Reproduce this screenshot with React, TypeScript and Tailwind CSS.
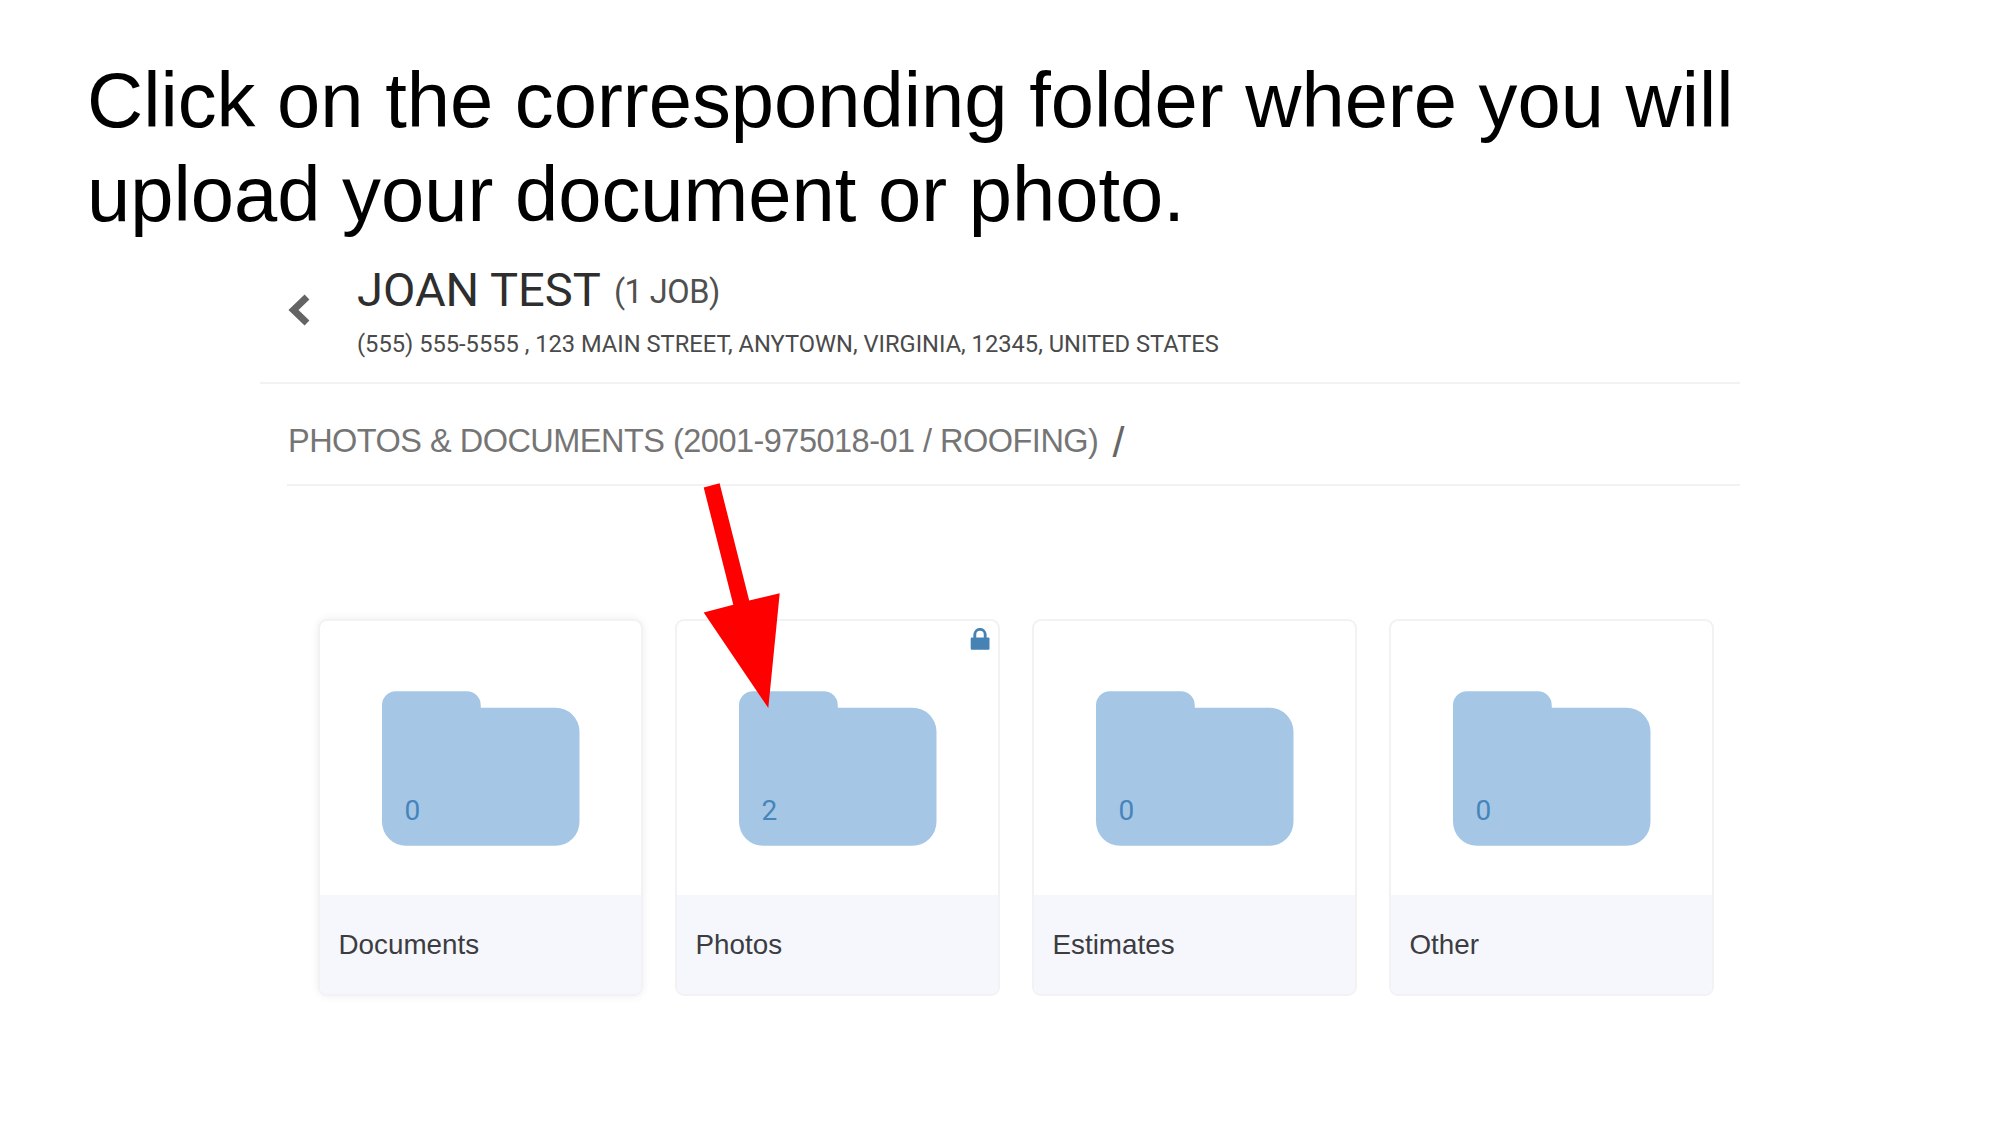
type Folder = { name: string; count: number; locked?: boolean; raised?: boolean };

const folders: Folder[] = [
  { name: 'Documents', count: 0, raised: true },
  { name: 'Photos', count: 2, locked: true },
  { name: 'Estimates', count: 0 },
  { name: 'Other', count: 0 },
];

function LockIcon() {
  return (
    <svg viewBox="0 0 20 22" className="absolute right-[8px] top-[7px] h-[22px] w-5" fill="none">
      <path d="M4.8 10V6.600a5.200 5.200 0 0 1 10.400 0V10" stroke="#4682b4" strokeWidth="2.900" />
      <rect x="0.7" y="9.6" width="18.8" height="12.2" rx="1" fill="#4682b4" />
    </svg>
  );
}

function FolderCard({ name, count, locked, raised }: Folder) {
  return (
    <div
      className={
        'relative flex h-[377px] w-[325px] flex-col overflow-hidden rounded-[9px] border-2 border-[#f2f2f4] bg-white ' +
        (raised ? 'shadow-[0_0_9px_rgba(0,0,0,0.07)]' : '')
      }
    >
      {locked && <LockIcon />}
      <div className="flex h-[274px] pl-[62.5px] pt-[70px]">
        <div className="relative h-[155px] w-[197.5px]">
          <svg viewBox="0 0 198 155" className="h-full w-full" fill="#a5c7e5">
            <path d="M0 14A14 14 0 0 1 14 0H85A14 14 0 0 1 99 14V16.5H174A24 24 0 0 1 198 40.500V131A24 24 0 0 1 174 155H24A24 24 0 0 1 0 131Z" />
          </svg>
          <span className="absolute bottom-[19px] left-[22.5px] font-['Roboto',sans-serif] text-[28px] leading-8 text-[#4685bb]">
            {count}
          </span>
        </div>
      </div>
      <div className="flex flex-1 items-center bg-[#f5f7fc] pl-[19px] text-[27.8px] leading-8 text-[#3c3c41]">
        {name}
      </div>
    </div>
  );
}

function PointerArrow() {
  return (
    <svg viewBox="0 0 78 226" className="absolute left-[703px] top-[483px] h-[226px] w-[78px]" fill="#ff0000">
      <path d="M0.700 4.500 16.600 0.300 46.200 117.500 76.700 110.200 65.300 225 0.700 129.600 30.300 121.700Z" />
    </svg>
  );
}

export default function App() {
  return (
    <main className="relative h-[1125px] w-[2000px] overflow-hidden bg-white font-['Liberation_Sans',sans-serif]">
      <h1 className="pb-px pl-[87px] pt-[53px] text-[77.75px] leading-[94px] text-black">
        Click on the corresponding folder where you will
        <br />
        upload your document or photo.
      </h1>

      <section className="ml-[260px] w-[1480px]">
        <header className="flex h-[142px] border-b-2 border-[#f2f2f2] pl-7 pt-5 font-['Roboto',sans-serif]">
          <svg viewBox="0 0 22 34" className="mt-[31px] h-[34px] w-[22px]" fill="none">
            <path d="M19 4 5.500 17 19 30" stroke="#646464" strokeWidth="7" />
          </svg>
          <div className="ml-[47px]">
            <div className="flex items-start">
              <h2 className="text-[47.1px] leading-[56px] text-[#2e2e2e]">JOAN TEST</h2>
              <span className="ml-[13px] mt-[11px] text-[32.5px] leading-[38px] tracking-[-0.5px] text-[#505050]">
                (1 JOB)
              </span>
            </div>
            <p className="mt-3 whitespace-nowrap text-[23.68px] leading-7 text-[#4a4a4a]">
              (555) 555-5555 , 123 MAIN STREET, ANYTOWN, VIRGINIA, 12345, UNITED STATES
            </p>
          </div>
        </header>

        <nav className="ml-[27px] flex h-[102px] border-b-2 border-[#f2f2f2] pt-[38px] text-[32.5px] leading-[38px] text-[#757575]">
          <span className="whitespace-nowrap pl-px tracking-[-0.52px]">
            PHOTOS &amp; DOCUMENTS (2001-975018-01 / ROOFING)
          </span>
          <span className="ml-[14px] mt-px text-[43px] text-[#666]">/</span>
        </nav>

        <div className="ml-[57.5px] mt-[133px] flex gap-8">
          {folders.map((folder) => (
            <FolderCard key={folder.name} {...folder} />
          ))}
        </div>
      </section>

      <PointerArrow />
    </main>
  );
}
